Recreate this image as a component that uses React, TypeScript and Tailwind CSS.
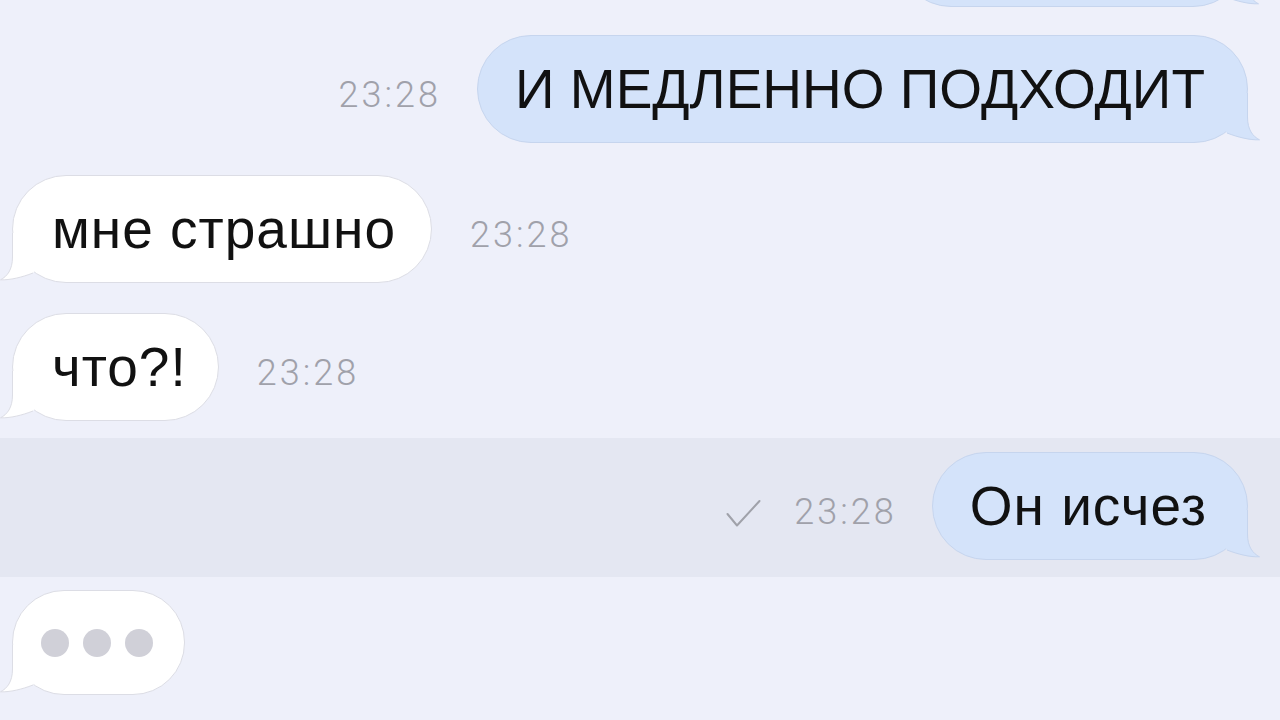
import React from "react";

function Tail({ side, fill, stroke }: { side: "left" | "right"; fill: string; stroke: string }) {
  const pos = side === "left" ? "left-[-13px]" : "right-[-13px] scale-x-[-1]";
  return (
    <svg
      className={`absolute bottom-[-1px] ${pos} pointer-events-none`}
      width="60"
      height="50"
      viewBox="0 0 60 50"
    >
      <path d="M12.5 0 L12.5 24 C12.5 37 7 43.5 0.5 46.8 C10 47.5 22 44.5 33 40 L42 30 L32 0 Z" fill={fill} />
      <path
        d="M12.5 0 L12.5 24 C12.5 37 7 43.5 0.5 46.8 C10 47.2 22 44.3 33 40"
        fill="none"
        stroke={stroke}
        strokeWidth="1"
      />
    </svg>
  );
}

function Time({ children, className = "" }: { children: React.ReactNode; className?: string }) {
  return (
    <span
      className={`text-[36px] leading-none font-light tracking-[3px] text-[#a0a1aa] mt-[12px] ${className}`}
      style={{ fontFamily: "Roboto, 'Liberation Sans', sans-serif" }}
    >
      {children}
    </span>
  );
}

function Incoming({ children, className = "" }: { children: React.ReactNode; className?: string }) {
  return (
    <div
      className={`relative h-[108px] flex items-center rounded-[54px] bg-white border border-[#dcdde5] text-[55px] leading-none tracking-[1px] text-[#111] ${className}`}
    >
      {children}
      <Tail side="left" fill="#ffffff" stroke="#dcdde5" />
    </div>
  );
}

function Outgoing({ children, className = "" }: { children: React.ReactNode; className?: string }) {
  return (
    <div
      className={`relative h-[108px] flex items-center rounded-[54px] bg-[#d4e3fa] border border-[#c6d5ee] text-[55px] leading-none text-[#111] ${className}`}
    >
      {children}
      <Tail side="right" fill="#d4e3fa" stroke="#c6d5ee" />
    </div>
  );
}

export default function App() {
  return (
    <div
      className="w-[1280px] h-[720px] overflow-hidden bg-[#eef0fa] flex flex-col"
      style={{ fontFamily: "'Liberation Sans', Arial, sans-serif" }}
    >
      {/* partial top bubble */}
      <div className="h-[7px] flex justify-end pr-[33px]">
        <div className="relative -mt-[101px] h-[108px] w-[350px] rounded-[54px] bg-[#d4e3fa] border border-[#c6d5ee]">
          <Tail side="right" fill="#d4e3fa" stroke="#c6d5ee" />
        </div>
      </div>

      {/* row 1 */}
      <div className="mt-[28px] flex justify-end items-center pr-[32px] gap-[36px]">
        <Time>23:28</Time>
        <Outgoing className="pl-[37px] pr-[42px]">И МЕДЛЕННО ПОДХОДИТ</Outgoing>
      </div>

      {/* row 2 */}
      <div className="mt-[32px] flex items-center pl-[12px] gap-[38px]">
        <Incoming className="pl-[39px] pr-[35px]">мне страшно</Incoming>
        <Time>23:28</Time>
      </div>

      {/* row 3 */}
      <div className="mt-[30px] flex items-center pl-[12px] gap-[38px]">
        <Incoming className="pl-[39px] pr-[31px]">что?!</Incoming>
        <Time>23:28</Time>
      </div>

      {/* highlighted row */}
      <div className="mt-[17px] h-[139px] bg-[#e4e7f2] pt-[14px] flex justify-end items-start pr-[32px]">
        <div className="flex items-center">
          <svg width="35" height="29" viewBox="0 0 35 29" className="mt-[14px] mr-[33px]">
            <polyline points="1.5,15 11,26.5 33.5,2" fill="none" stroke="#a0a2aa" strokeWidth="2" strokeLinecap="round" strokeLinejoin="round" />
          </svg>
          <Time className="mr-[35px]">23:28</Time>
          <Outgoing className="pl-[37px] pr-[40px] tracking-[1px]">Он исчез</Outgoing>
        </div>
      </div>

      {/* typing */}
      <div className="mt-[13px] flex pl-[12px]">
        <div className="relative h-[105px] w-[173px] rounded-[52px] bg-white border border-[#dcdde5] flex items-center pl-[28px] gap-[14px]">
          <span className="w-[28px] h-[28px] rounded-full bg-[#d0d0d8]" />
          <span className="w-[28px] h-[28px] rounded-full bg-[#d0d0d8]" />
          <span className="w-[28px] h-[28px] rounded-full bg-[#d0d0d8]" />
          <Tail side="left" fill="#ffffff" stroke="#dcdde5" />
        </div>
      </div>
    </div>
  );
}
